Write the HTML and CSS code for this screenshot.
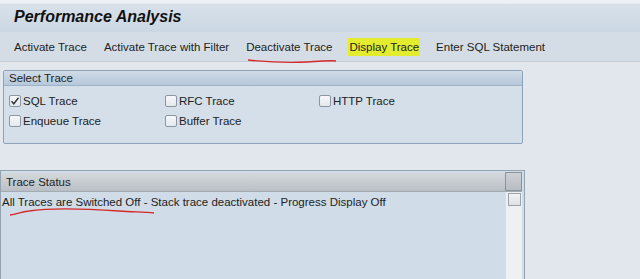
FILE: index.html
```html
<!DOCTYPE html>
<html>
<head>
<meta charset="utf-8">
<link rel="stylesheet" href="styles.css">
</head>
<body>
<div class="titlebar"><span class="title">Performance Analysis</span></div>
<div class="toolbar">
  <span class="tb-item">Activate Trace</span>
  <span class="tb-item">Activate Trace with Filter</span>
  <span class="tb-item">Deactivate Trace</span>
  <span class="tb-item hl">Display Trace</span>
  <span class="tb-item">Enter SQL Statement</span>
</div>
<div class="content">
  <div class="group">
    <div class="group-head">Select Trace</div>
    <div class="group-body">
      <div class="cb-grid">
        <label class="cb"><span class="box checked"><svg width="10" height="10" viewBox="0 0 10 10"><path d="M1.5 5.2 L3.8 7.8 L8.5 1.8" fill="none" stroke="#333" stroke-width="1.4"/></svg></span>SQL Trace</label>
        <label class="cb"><span class="box"></span>RFC Trace</label>
        <label class="cb"><span class="box"></span>HTTP Trace</label>
        <label class="cb"><span class="box"></span>Enqueue Trace</label>
        <label class="cb"><span class="box"></span>Buffer Trace</label>
      </div>
    </div>
  </div>
  <div class="status">
    <div class="status-head">
      <span class="status-title">Trace Status</span>
      <span class="corner"></span>
    </div>
    <div class="status-body">
      <div class="status-text">All Traces are Switched Off - Stack trace deactivated - Progress Display Off</div>
      <div class="vscroll"><span class="up"></span><span class="track"></span></div>
    </div>
  </div>
</div>
<svg class="mark mark1" width="100" height="8" viewBox="0 0 100 8"><path d="M1 2 C 20 4, 40 5, 60 4 S 85 2, 89 3" fill="none" stroke="#d62828" stroke-width="1.4"/></svg>
<svg class="mark mark2" width="150" height="12" viewBox="0 0 150 12"><path d="M1 9 C 8 8, 12 6, 20 5 C 40 2, 80 3, 110 5 C 125 6, 135 6, 145 7" fill="none" stroke="#d62828" stroke-width="1.4"/></svg>
</body>
</html>
```
FILE: styles.css
```css
* { box-sizing: border-box; }
html, body { margin: 0; padding: 0; }
body {
  width: 640px;
  height: 279px;
  overflow: hidden;
  background: #e1e7ed;
  font-family: "Liberation Sans", Arial, sans-serif;
  font-size: 11.5px;
  color: #222;
  position: relative;
}
.titlebar {
  height: 32px;
  padding-left: 14px;
  display: flex;
  align-items: center;
  background: linear-gradient(#eef2f6 0, #eef2f6 3px, #d8e1ea 4px, #cbd7e3 100%);
}
.title {
  font-size: 16px;
  font-weight: bold;
  font-style: italic;
  color: #111;
  padding-top: 2px;
}
.toolbar {
  height: 30px;
  padding-left: 14px;
  display: flex;
  align-items: center;
  gap: 17px;
  background: #d4dde6;
  border-bottom: 1px solid #c6d0da;
}
.tb-item { color: #222; padding: 2px 0; }
.tb-item.hl { background: #e3ec2e; padding: 3px 1px; margin-left: -1px; margin-right: -1px; }
.content { padding-top: 8px; }
.group {
  margin-left: 3px;
  width: 520px;
  height: 74px;
  border: 1px solid #8fa3b8;
  border-radius: 2px;
  background: #d4dfe9;
  display: flex;
  flex-direction: column;
}
.group-head {
  height: 15px;
  padding-left: 5px;
  line-height: 15px;
  background: linear-gradient(#cfdbe7, #b6c8da);
  border-bottom: 1px solid #9fb2c6;
  color: #222;
}
.group-body { padding: 8px 0 0 5px; }
.cb-grid {
  display: grid;
  grid-template-columns: 156px 154px 150px;
  row-gap: 7px;
}
.cb { display: flex; align-items: center; height: 13px; white-space: nowrap; }
.box {
  width: 12px; height: 12px;
  border: 1px solid #8a96a2;
  border-radius: 2px;
  background: linear-gradient(#f6f8fa, #e4e9ee);
  margin-right: 2px;
  display: flex; align-items: center; justify-content: center;
}
.status {
  margin-top: 26px;
  width: 525px;
  height: 120px;
  border: 1px solid #95a3b1;
  border-bottom: none;
  background: #d0dde8;
  padding: 2px 2px 0 0;
  display: flex;
  flex-direction: column;
}
.status-head {
  height: 19px;
  display: flex;
  background: linear-gradient(#d4d8dc, #b9bfc5);
  border-bottom: 1px solid #a2aab2;
}
.status-title { flex: 1; padding-left: 5px; line-height: 18px; color: #222; }
.corner {
  width: 17px; height: 19px;
  border: 1px solid #8b939b;
  background: linear-gradient(#cdd1d5, #b8bdc2);
  margin-top: -1px;
}
.status-body { flex: 1; display: flex; }
.status-text { flex: 1; padding: 4px 0 0 1px; white-space: nowrap; color: #222; }
.vscroll {
  width: 17px;
  display: flex;
  flex-direction: column;
  align-items: center;
  background: #eef0f2;
  border-left: 1px solid #d8dde2;
}
.up {
  width: 13px; height: 13px;
  margin-top: 1px;
  border: 1px solid #9aa2aa;
  background: linear-gradient(#f2f4f6, #dde1e5);
}
.track { flex: 1; }
.mark { position: absolute; }
.mark1 { left: 247px; top: 58px; }
.mark2 { left: 9px; top: 206px; }
```
